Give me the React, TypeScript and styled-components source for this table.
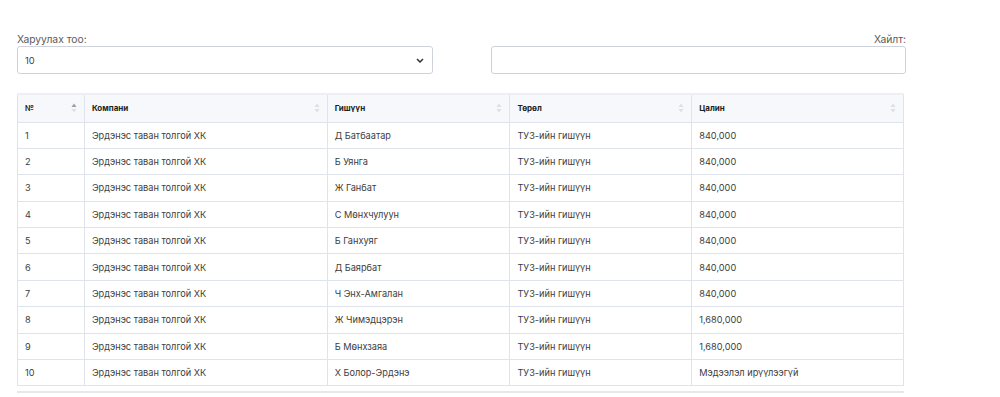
import styled, { createGlobalStyle } from 'styled-components';

const GlobalStyle = createGlobalStyle`
  body {
    margin: 0;
    background: #ffffff;
    font-family: Inter, "Noto Sans", sans-serif;
    color: #333;
  }
`;

const Page = styled.div`
  width: 1000px;
  height: 397px;
  padding: 32px 94px 0 17px;
  box-sizing: border-box;
  overflow: hidden;
`;

const Controls = styled.div`
  display: flex;
  justify-content: space-between;
  margin-bottom: 19px;
`;

const Field = styled.div<{ alignRight?: boolean }>`
  display: flex;
  flex-direction: column;
  width: ${({ alignRight }) => (alignRight ? '415px' : '416px')};
  align-items: ${({ alignRight }) => (alignRight ? 'flex-end' : 'flex-start')};
`;

const Label = styled.label`
  font-size: 10.3px;
  color: #5a5a5a;
  line-height: 14px;
`;

const Box = styled.div`
  width: 100%;
  height: 28px;
  box-sizing: border-box;
  border: 1px solid #ced3db;
  border-radius: 3px;
  display: flex;
  align-items: center;
  justify-content: space-between;
  padding: 0 8px 0 7px;
  font-size: 9.4px;
  color: #444;
  background: #fff;
`;

const Table = styled.table`
  width: 887px;
  border-collapse: collapse;
  font-size: 9.2px;
  border-bottom: 1px solid #dfe3ec;
`;

const Th = styled.th<{ w: number }>`
  width: ${({ w }) => w}px;
  height: 28px;
  box-sizing: border-box;
  background: #f6f8fb;
  border: 1px solid #dfe3ec;
  border-top: 2px solid #eceff4;
  text-align: left;
  padding: 0 7px;
  font-weight: 700;
  font-size: 8px;
  color: #222;
`;

const HeadInner = styled.div`
  display: flex;
  align-items: center;
  justify-content: space-between;
`;

const Td = styled.td`
  height: 26.4px;
  box-sizing: border-box;
  border: 1px solid #dfe3ec;
  padding: 0 7px;
  color: #3d3d3d;
  white-space: nowrap;
`;

const Foot = styled.div`
  width: 887px;
  height: 2px;
  background: #e6e8ec;
  margin-top: 5px;
`;

const SortIcon = ({ active }: { active?: boolean }) => (
  <svg width="6" height="10" viewBox="0 0 6 10">
    <path d="M3 0.5 L5.5 4 H0.5 Z" fill={active ? '#9aa0a8' : '#dde0e5'} />
    <path d="M3 9.5 L5.5 6 H0.5 Z" fill="#dde0e5" />
  </svg>
);

const Chevron = () => (
  <svg width="8" height="5" viewBox="0 0 8 5">
    <path d="M1 1 L4 4 L7 1" fill="none" stroke="#333" strokeWidth="1.5" />
  </svg>
);

const cols = [
  { name: '№', w: 67 },
  { name: 'Компани', w: 243 },
  { name: 'Гишүүн', w: 183 },
  { name: 'Төрөл', w: 182 },
  { name: 'Цалин', w: 212 },
];

const rows = [
  ['Д Батбаатар', '840,000'],
  ['Б Уянга', '840,000'],
  ['Ж Ганбат', '840,000'],
  ['С Мөнхчулуун', '840,000'],
  ['Б Ганхуяг', '840,000'],
  ['Д Баярбат', '840,000'],
  ['Ч Энх-Амгалан', '840,000'],
  ['Ж Чимэдцэрэн', '1,680,000'],
  ['Б Мөнхзаяа', '1,680,000'],
  ['Х Болор-Эрдэнэ', 'Мэдээлэл ирүүлээгүй'],
];

export default function App() {
  return (
    <>
      <GlobalStyle />
      <Page>
        <Controls>
          <Field>
            <Label>Харуулах тоо:</Label>
            <Box>
              <span>10</span>
              <Chevron />
            </Box>
          </Field>
          <Field alignRight>
            <Label>Хайлт:</Label>
            <Box />
          </Field>
        </Controls>
        <Table>
          <thead>
            <tr>
              {cols.map((c, i) => (
                <Th key={c.name} w={c.w}>
                  <HeadInner>
                    <span>{c.name}</span>
                    <SortIcon active={i === 0} />
                  </HeadInner>
                </Th>
              ))}
            </tr>
          </thead>
          <tbody>
            {rows.map((r, i) => (
              <tr key={i}>
                <Td>{i + 1}</Td>
                <Td>Эрдэнэс таван толгой ХК</Td>
                <Td>{r[0]}</Td>
                <Td>ТУЗ-ийн гишүүн</Td>
                <Td>{r[1]}</Td>
              </tr>
            ))}
          </tbody>
        </Table>
        <Foot />
      </Page>
    </>
  );
}
